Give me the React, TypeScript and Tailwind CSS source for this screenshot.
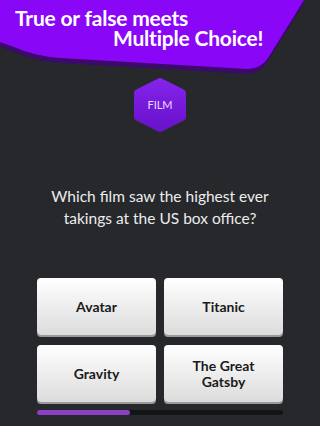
import React from 'react';

const answers = ['Avatar', 'Titanic', 'Gravity', 'The Great Gatsby'];

export default function App() {
  const progress = 38;

  return (
    <main className="min-h-[426px] w-[320px] bg-[#26282c] overflow-hidden" style={{ fontFamily: 'Lato, "Open Sans", sans-serif' }}>
      {/* banner */}
      <header className="relative h-[74px]">
        <svg className="absolute inset-0" width="320" height="74" viewBox="0 0 320 74">
          <path d="M0 0 H304 L268 58 Q262 70 248 71 L60 60 Q34 58 14 49 L0 44 Z" fill="#3b0a6b" transform="translate(0 3)" />
          <path d="M0 0 H304 L268 58 Q262 68 248 69 L60 58 Q34 56 14 47 L0 42 Z" fill="#8a06f7" />
        </svg>
        <div className="relative pt-[8px] text-[21px] font-bold leading-[20px] text-white tracking-[-0.2px]">
          <p className="pl-[15px]">True or false meets</p>
          <p className="pl-[113px]">Multiple Choice!</p>
        </div>
      </header>

      {/* category badge */}
      <div className="relative mx-auto mt-[4px] h-[54px] w-[54px]">
        <svg className="absolute inset-0" width="54" height="54" viewBox="0 0 54 54">
          <defs>
            <linearGradient id="hex" x1="0" y1="0" x2="0" y2="1">
              <stop offset="0" stopColor="#8322ea" />
              <stop offset="1" stopColor="#6a12cc" />
            </linearGradient>
          </defs>
          <polygon
            points="27,4 49,15 49,39 27,50 5,39 5,15"
            fill="url(#hex)"
            stroke="url(#hex)"
            strokeWidth="8"
            strokeLinejoin="round"
          />
        </svg>
        <span className="relative flex h-full items-center justify-center text-[11px] text-[#eadcff]">FILM</span>
      </div>

      {/* question */}
      <p className="mt-[53px] px-[36px] text-center text-[15.5px] leading-[22px] text-[#ececec]">
        Which film saw the highest ever takings at the US box office?
      </p>

      {/* answers */}
      <div className="mt-[49px] grid grid-cols-2 gap-x-[8px] gap-y-[10px] px-[37px]">
        {answers.map((a) => (
          <button
            key={a}
            className="flex h-[57px] items-center justify-center rounded-[4px] bg-gradient-to-b from-white to-[#dcdcdc] px-3 text-center text-[14px] font-bold leading-[16px] text-[#1b1b1b] shadow-[0_2px_0_#9a9a9a]"
          >
            {a}
          </button>
        ))}
      </div>

      {/* progress */}
      <div className="mx-[37px] mt-[8px] h-[5px] rounded-full bg-[#131416]">
        <div className="h-full rounded-full bg-[#8a3fc4]" style={{ width: `${progress}%` }} />
      </div>
    </main>
  );
}
